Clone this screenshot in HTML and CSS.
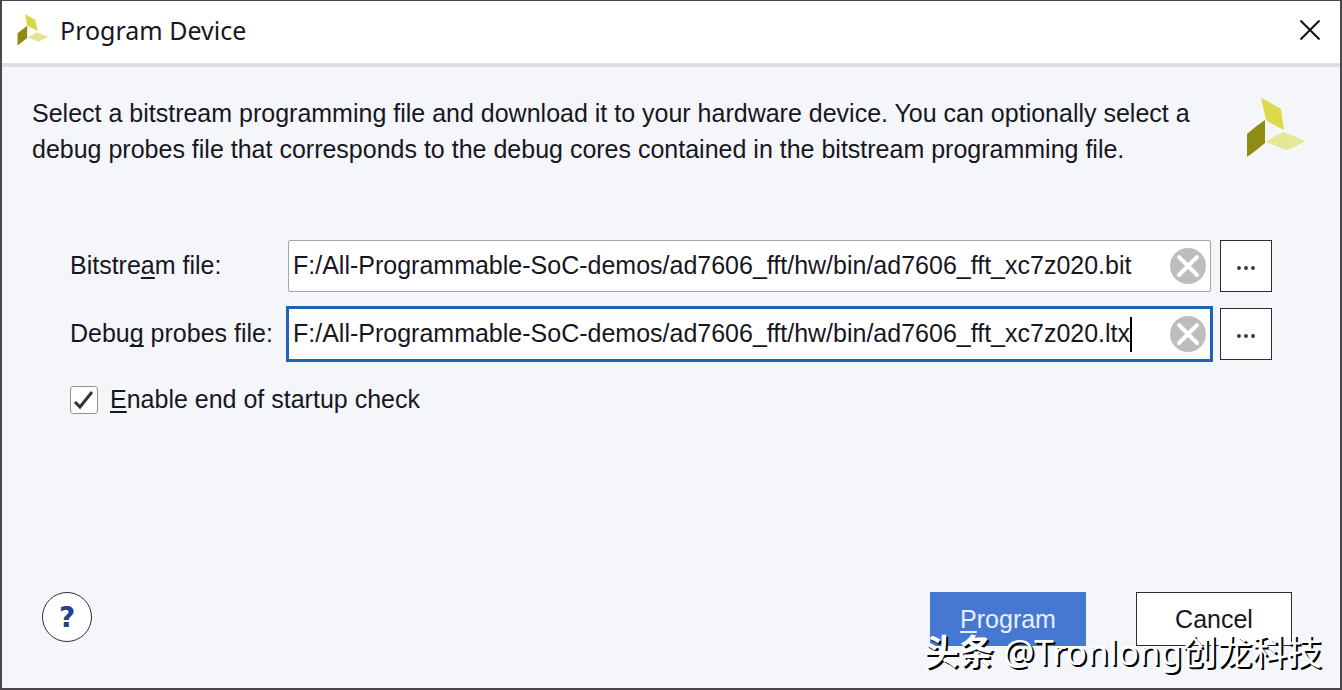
FILE: index.html
```html
<!DOCTYPE html>
<html lang="en">
<head>
    <meta charset="UTF-8">
    <meta name="viewport" content="width=device-width, initial-scale=1.0">
    <title>Program Device</title>
    <link rel="stylesheet" href="styles.css">
</head>
<body>
    <div class="dialog">
        <!-- Title bar -->
        <header class="title-bar">
            <svg class="title-logo" viewBox="0 0 60 60" aria-hidden="true">
                <path fill="#d9d640" d="M15 0 L34 11 L39 32 L19 22 Z"/>
                <path fill="#8c8a12" d="M1 36 L19 22 L19 45 L1 59 Z"/>
                <path fill="#e3e594" d="M20 44 L38 34 L59 43 L40 52 Z"/>
            </svg>
            <h1 class="title">Program Device</h1>
            <button class="close-btn" aria-label="Close">
                <svg viewBox="0 0 20 20" aria-hidden="true">
                    <path d="M0.5 0.5 L19.5 19.5 M19.5 0.5 L0.5 19.5"/>
                </svg>
            </button>
        </header>

        <main class="content">
            <!-- Description -->
            <div class="intro">
                <p>Select a bitstream programming file and download it to your hardware device. You can optionally select a debug probes file that corresponds to the debug cores contained in the bitstream programming file.</p>
                <svg class="intro-logo" viewBox="0 0 60 60" aria-hidden="true">
                    <path fill="#dcd94c" d="M15 0 Q25 5 35 11 L38 32 Q29 28 20 22 Z"/>
                    <path fill="#8f8c14" d="M1 36 Q10 28 19 22 L19 45 Q11 52 1 59 Z"/>
                    <path fill="#e5e697" d="M20 44 Q29 37 38 34 L59 43 Q50 49 40 52 Z"/>
                </svg>
            </div>

            <!-- File fields -->
            <div class="file-form">
                <label for="bitstreamFile">Bitstre<u>a</u>m file:</label>
                <div class="field">
                    <input type="text" id="bitstreamFile" value="F:/All-Programmable-SoC-demos/ad7606_fft/hw/bin/ad7606_fft_xc7z020.bit">
                    <button class="clear-btn" aria-label="Clear bitstream file">
                        <svg viewBox="0 0 36 36" aria-hidden="true">
                            <circle cx="18" cy="18" r="18"/>
                            <path d="M9 9 L27 27 M27 9 L9 27"/>
                        </svg>
                    </button>
                </div>
                <button class="browse-btn" aria-label="Browse for bitstream file">
                    <svg viewBox="0 0 20 4" aria-hidden="true">
                        <circle cx="3" cy="2" r="1.9"/>
                        <circle cx="10" cy="2" r="1.9"/>
                        <circle cx="17" cy="2" r="1.9"/>
                    </svg>
                </button>

                <label for="probesFile">Debu<u>g</u> probes file:</label>
                <div class="field active">
                    <input type="text" id="probesFile" value="F:/All-Programmable-SoC-demos/ad7606_fft/hw/bin/ad7606_fft_xc7z020.ltx">
                    <span class="caret"></span>
                    <button class="clear-btn" aria-label="Clear debug probes file">
                        <svg viewBox="0 0 36 36" aria-hidden="true">
                            <circle cx="18" cy="18" r="18"/>
                            <path d="M9 9 L27 27 M27 9 L9 27"/>
                        </svg>
                    </button>
                </div>
                <button class="browse-btn" aria-label="Browse for debug probes file">
                    <svg viewBox="0 0 20 4" aria-hidden="true">
                        <circle cx="3" cy="2" r="1.9"/>
                        <circle cx="10" cy="2" r="1.9"/>
                        <circle cx="17" cy="2" r="1.9"/>
                    </svg>
                </button>
            </div>

            <div class="check-row">
                <span class="check-box">
                    <input type="checkbox" id="startupCheck" checked>
                    <svg viewBox="0 0 26 26" aria-hidden="true">
                        <path d="M4 15 L9 20 L21 5"/>
                    </svg>
                </span>
                <label for="startupCheck"><u>E</u>nable end of startup check</label>
            </div>
        </main>

        <!-- Buttons -->
        <footer class="footer">
            <button class="help-btn" aria-label="Help">?</button>
            <div class="actions">
                <button class="btn btn-primary"><u>P</u>rogram</button>
                <button class="btn">Cancel</button>
            </div>
        </footer>

        <div class="watermark"><b>头条</b> @Tronlong创龙科技</div>
    </div>
</body>
</html>
```

FILE: styles.css
```css
:root {
    --bg: #f4f6f9;
    --text: #18161f;
    --border: #4b464e;
    --blue: #4678d2;
    --focus: #1f63b4;
}

* {
    margin: 0;
    padding: 0;
    box-sizing: border-box;
}

body {
    background: var(--bg);
    color: var(--text);
    font-family: "Liberation Sans", Arial, sans-serif;
    font-size: 25px;
}

button,
input {
    font: inherit;
    color: inherit;
}

button {
    cursor: pointer;
}

u {
    text-decoration-thickness: 2px;
    text-underline-offset: 3px;
    text-decoration-skip-ink: none;
}

.dialog {
    position: relative;
    display: flex;
    flex-direction: column;
    min-height: 100vh;
    border: 2px solid var(--border);
    border-top-width: 1px;
}

/* Title bar */
.title-bar {
    display: flex;
    align-items: center;
    height: 66px;
    padding: 0 20px 4px 15px;
    background: #fff;
    border-bottom: 4px solid #dce0e5;
}

.title-logo {
    width: 32px;
    height: 32px;
}

.title {
    flex: 1;
    margin-left: 11px;
    font-family: "Noto Sans", sans-serif;
    font-size: 25px;
    font-weight: 400;
}

.close-btn {
    display: flex;
    border: none;
    background: none;
}

.close-btn svg {
    width: 20px;
    height: 20px;
    stroke: #111;
    stroke-width: 2;
}

/* Content */
.content {
    flex: 1;
}

.intro {
    display: flex;
    justify-content: space-between;
    gap: 40px;
    padding: 28px 34px 0 30px;
}

.intro p {
    max-width: 1160px;
    line-height: 36px;
}

.intro-logo {
    flex-shrink: 0;
    width: 60px;
    height: 60px;
    margin-top: 3px;
}

.file-form {
    display: grid;
    grid-template-columns: 209px 1fr 52px;
    column-gap: 9px;
    row-gap: 16px;
    align-items: center;
    margin-top: 73px;
    padding: 0 68px;
}

.field {
    position: relative;
    display: flex;
    align-items: center;
    height: 52px;
    padding: 0 4px;
    border: 1px solid #a4a6ab;
    border-radius: 2px;
    background: #fff;
}

.field.active {
    outline: 3px solid var(--focus);
    outline-offset: -1px;
    border-radius: 0;
}

.file-form label,
.field input {
    padding-bottom: 2px;
}

.field input {
    flex: 1;
    min-width: 0;
    border: none;
    outline: none;
    background: none;
}

.caret {
    position: absolute;
    top: 8px;
    left: 841px;
    width: 2px;
    height: 35px;
    background: #000;
}

.clear-btn {
    display: flex;
    border: none;
    background: none;
}

.clear-btn svg {
    width: 36px;
    height: 36px;
    fill: #bcbdbf;
    stroke-linecap: round;
}

.clear-btn path {
    stroke: #fff;
    stroke-width: 4;
}

.browse-btn {
    display: flex;
    align-items: center;
    justify-content: center;
    height: 52px;
    padding-top: 4px;
    border: 1px solid #2f2c33;
    background: #fff;
}

.browse-btn svg {
    width: 20px;
    height: 4px;
    fill: #333;
}

.check-row {
    display: flex;
    align-items: center;
    gap: 12px;
    margin-top: 25px;
    padding: 0 68px;
}

.check-box {
    position: relative;
    width: 28px;
    height: 28px;
}

.check-box input {
    display: block;
    width: 28px;
    height: 28px;
    appearance: none;
    border: 1px solid #8f9197;
    border-radius: 3px;
    background: #fff;
}

.check-box svg {
    position: absolute;
    inset: 1px;
    display: none;
    fill: none;
    stroke: #333;
    stroke-width: 3;
    pointer-events: none;
}

.check-box input:checked + svg {
    display: block;
}

/* Footer */
.footer {
    display: flex;
    align-items: flex-start;
    justify-content: space-between;
    padding: 0 48px 42px 40px;
}

.help-btn {
    width: 50px;
    height: 50px;
    border: 1px solid #2f2c33;
    border-radius: 50%;
    background: #fff;
    color: #25408c;
    font-family: "DejaVu Sans", sans-serif;
    font-size: 28px;
    font-weight: 700;
}

.actions {
    display: flex;
    gap: 50px;
}

.btn {
    width: 156px;
    height: 54px;
    border: 1px solid #2f2c33;
    background: #fff;
}

.btn-primary {
    border-color: var(--blue);
    background: var(--blue);
    color: #e6f0ff;
}

.watermark {
    position: absolute;
    right: 18px;
    bottom: 12px;
    color: #fff;
    font-family: "Noto Sans", "Noto Sans CJK SC", sans-serif;
    font-size: 35px;
    font-weight: 400;
    line-height: 48px;
    white-space: nowrap;
    text-shadow: 2px 2px 0 #000;
    pointer-events: none;
}

.watermark b {
    font-weight: 700;
}
```
